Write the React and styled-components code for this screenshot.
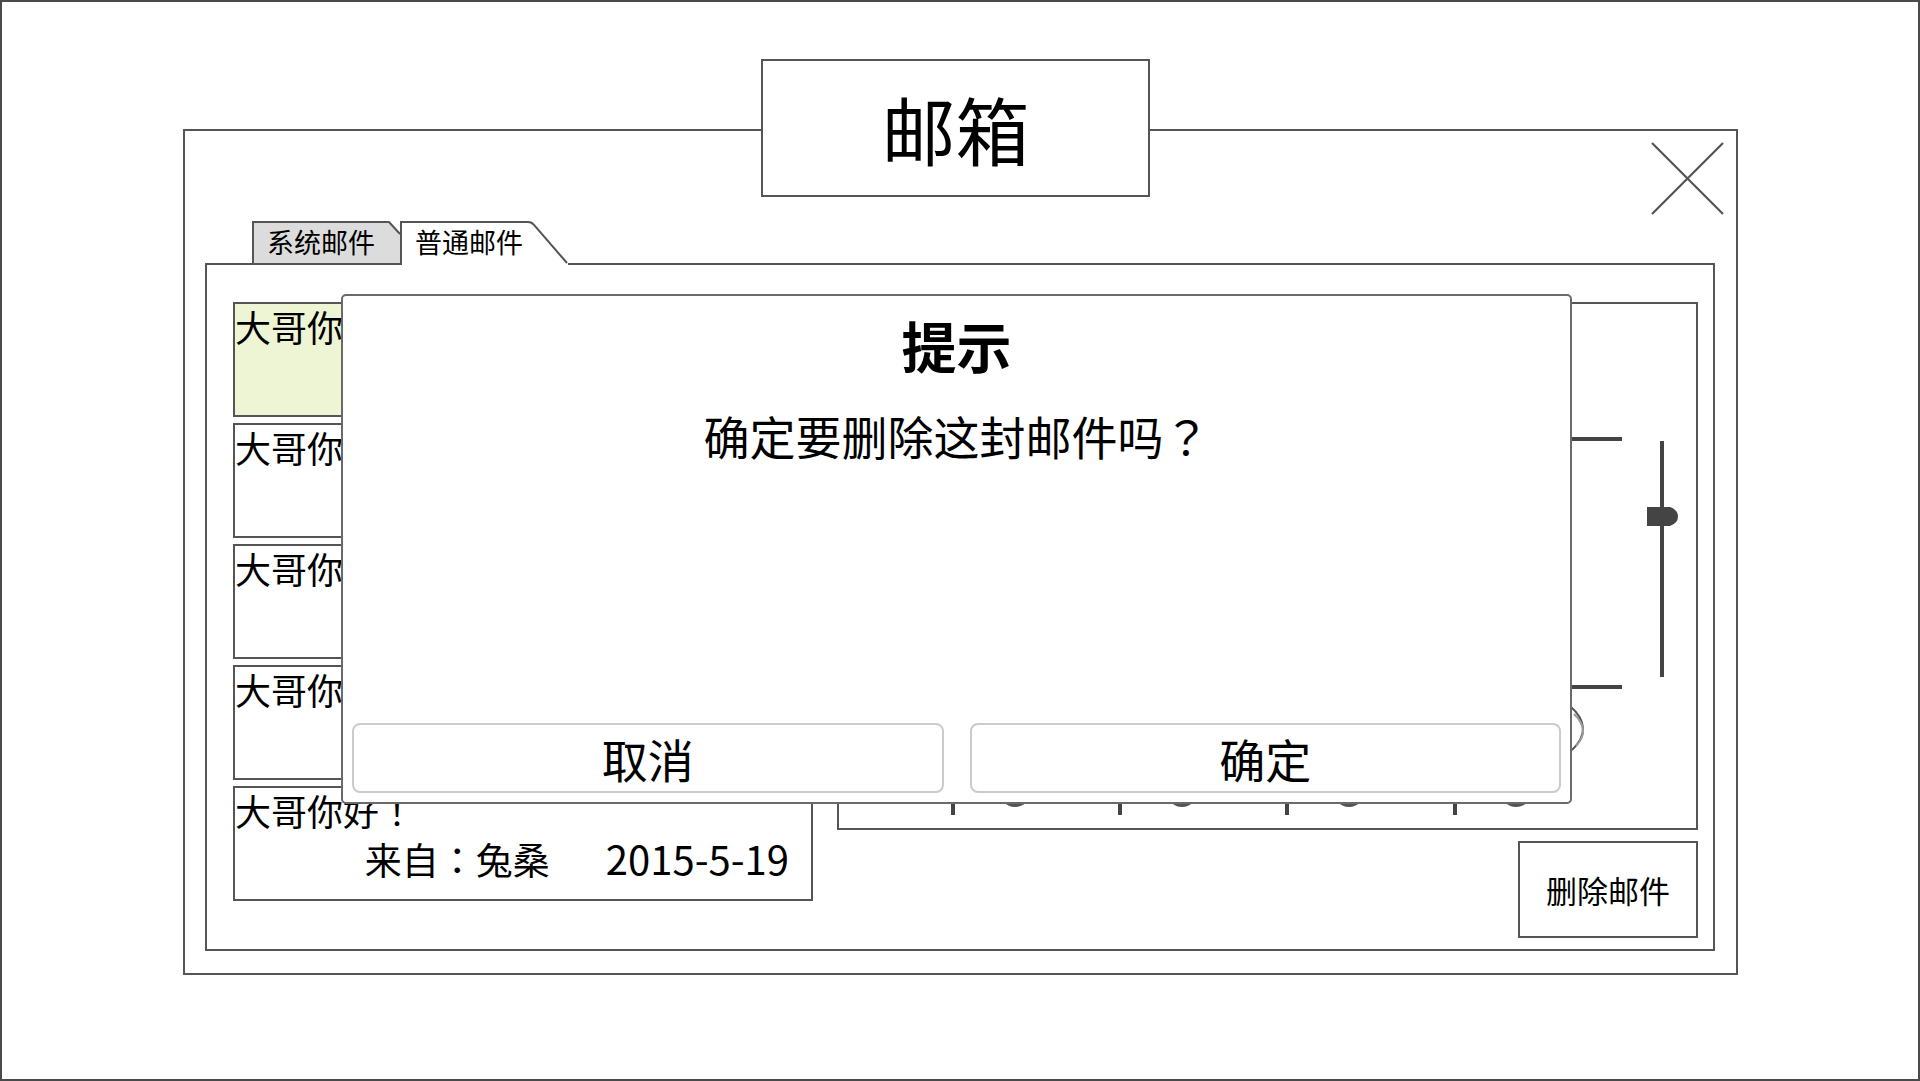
import React, { useState } from 'react';
import styled, { createGlobalStyle } from 'styled-components';

const mails = [
  { id: 1, title: '大哥你好', from: '兔桑', date: '2015-5-19' },
  { id: 2, title: '大哥你好', from: '兔桑', date: '2015-5-19' },
  { id: 3, title: '大哥你好', from: '兔桑', date: '2015-5-19' },
  { id: 4, title: '大哥你好', from: '兔桑', date: '2015-5-19' },
  { id: 5, title: '大哥你好', from: '兔桑', date: '2015-5-19' }
];

const App = () => {
  const [activeTab, setActiveTab] = useState('normal');
  const [selected, setSelected] = useState(1);
  const [confirmOpen, setConfirmOpen] = useState(true);

  return (
    <>
      <GlobalStyle />
      <Frame>
        <Panel>
          <TitleBox>邮箱</TitleBox>
          <CloseButton aria-label="关闭">
            <svg width="73" height="73" viewBox="0 0 73 73">
              <path d="M1 1 L72 72 M72 1 L1 72" stroke="#555" strokeWidth="2.2" fill="none" />
            </svg>
          </CloseButton>

          <TabRow>
            <Tab $active={activeTab === 'system'} $width={149} onClick={() => setActiveTab('system')}>
              <svg width="149" height="42" viewBox="0 0 149 42">
                <polygon points="0,42 0,0 137,0 149,13 149,42" fill="#dcdcdc" />
                <path d="M1 42 V1 H137 L148 13" stroke="#555" strokeWidth="2" fill="none" />
              </svg>
              <TabLabel>系统邮件</TabLabel>
            </Tab>
            <Tab $active={activeTab === 'normal'} $width={168} $front onClick={() => setActiveTab('normal')}>
              <svg width="168" height="44" viewBox="0 0 168 44">
                <polygon points="0,44 0,0 128,0 134,4 168,42 168,44" fill="#fff" />
                <path d="M1 44 V1 H128 Q132 1 134 4 L167 42" stroke="#555" strokeWidth="2" fill="none" />
              </svg>
              <TabLabel>普通邮件</TabLabel>
            </Tab>
          </TabRow>

          <TabPanel>
            <MailList>
              {mails.map((m) => (
                <MailItem key={m.id} $selected={selected === m.id} onClick={() => setSelected(m.id)}>
                  <MailTitle>
                    {m.title}
                    <Punct>！</Punct>
                  </MailTitle>
                  <MailMeta>
                    来自<Punct>：</Punct>
                    {m.from}
                    <MailDate>{m.date}</MailDate>
                  </MailMeta>
                </MailItem>
              ))}
            </MailList>

            <RightColumn>
              <Preview>
                <svg width="857" height="524" viewBox="0 0 857 524">
                  <rect x="500" y="133" width="283" height="4" fill="#444" />
                  <rect x="500" y="381" width="283" height="4" fill="#444" />
                  <rect x="821" y="137" width="4" height="236" fill="#444" />
                  <path d="M808 203 H831 Q839 206 839 212.5 Q839 219 831 222 H808 Z" fill="#444" />
                  <path d="M731 402 Q756 424 733 446" stroke="#555" strokeWidth="2" fill="none" />
                  <path d="M735 410 Q752 426 737 442" stroke="#999" strokeWidth="2" fill="none" />
                  {[176, 343, 510, 677].map((cx) => (
                    <circle key={cx} cx={cx} cy="487" r="16" fill="#555" />
                  ))}
                  {[112, 279, 446, 614].map((x) => (
                    <rect key={x} x={x} y="495" width="4" height="16" fill="#444" />
                  ))}
                </svg>
              </Preview>
              <DeleteButton onClick={() => setConfirmOpen(true)}>删除邮件</DeleteButton>
            </RightColumn>

            {confirmOpen && (
              <Dialog>
                <DialogTitle>提示</DialogTitle>
                <DialogText>
                  确定要删除这封邮件吗<Punct>？</Punct>
                </DialogText>
                <DialogButtons>
                  <DialogButton onClick={() => setConfirmOpen(false)}>取消</DialogButton>
                  <DialogButton onClick={() => setConfirmOpen(false)}>确定</DialogButton>
                </DialogButtons>
              </Dialog>
            )}
          </TabPanel>
        </Panel>
      </Frame>
    </>
  );
};

const GlobalStyle = createGlobalStyle`
  html, body {
    margin: 0;
    padding: 0;
    overflow: hidden;
    background: #fff;
  }
  body {
    font-family: "Noto Sans CJK SC", "Noto Sans", sans-serif;
    color: #000;
  }
  * {
    box-sizing: border-box;
  }
`;

const Frame = styled.div`
  width: 100vw;
  height: 100vh;
  border: 2px solid #4a4a4a;
  padding-top: 127px;
`;

const Panel = styled.div`
  position: relative;
  width: 1555px;
  height: 846px;
  margin: 0 auto;
  border: 2px solid #555;
  padding: 11px 12px 0 20.5px;
  display: flex;
  flex-direction: column;
`;

const TitleBox = styled.div`
  position: absolute;
  left: 576.5px;
  top: -72.3px;
  width: 389px;
  height: 138px;
  border: 2px solid #555;
  background: #fff;
  display: flex;
  align-items: center;
  justify-content: center;
  font-size: 74px;
  line-height: 1;
`;

const CloseButton = styled.button`
  align-self: flex-end;
  width: 73px;
  height: 73px;
  padding: 0;
  border: none;
  background: none;
  cursor: pointer;
  svg {
    display: block;
  }
`;

const TabRow = styled.div`
  display: flex;
  align-items: flex-start;
  height: 42px;
  margin-top: 6px;
  margin-right: 9px;
  padding-left: 47px;
`;

const Tab = styled.div`
  position: relative;
  z-index: ${(p) => (p.$front ? 2 : 1)};
  width: ${(p) => p.$width}px;
  height: ${(p) => (p.$front ? 44 : 42)}px;
  margin-left: ${(p) => (p.$front ? -1 : 0)}px;
  cursor: pointer;
  svg {
    position: absolute;
    left: 0;
    top: 0;
    display: block;
  }
`;

const TabLabel = styled.span`
  position: relative;
  display: block;
  padding-left: 15px;
  font-size: 27px;
  line-height: 42px;
  white-space: nowrap;
`;

const TabPanel = styled.div`
  position: relative;
  height: 688px;
  margin-right: 9px;
  border: 2px solid #555;
  padding: 37px 14px 0 26px;
  display: flex;
  gap: 24px;
  align-items: flex-start;
`;

const MailList = styled.div`
  width: 580px;
  display: flex;
  flex-direction: column;
  gap: 6px;
`;

const MailItem = styled.div`
  height: 115px;
  border: 2px solid #555;
  background: ${(p) => (p.$selected ? '#eef5d4' : '#fff')};
  cursor: pointer;
  overflow: hidden;
`;

const Punct = styled.span`
  font-family: "Noto Sans CJK TC", "Noto Sans CJK SC", sans-serif;
`;

const MailTitle = styled.div`
  font-size: 36px;
  line-height: 44px;
  white-space: nowrap;
`;

const MailMeta = styled.div`
  margin-top: 4px;
  padding-right: 22px;
  text-align: right;
  font-size: 37px;
  line-height: 44px;
  white-space: nowrap;
`;

const MailDate = styled.span`
  margin-left: 56px;
  font-size: 40px;
`;

const RightColumn = styled.div`
  width: 861px;
  display: flex;
  flex-direction: column;
  align-items: flex-end;
`;

const Preview = styled.div`
  width: 861px;
  height: 528px;
  border: 2px solid #555;
  svg {
    display: block;
  }
`;

const DeleteButton = styled.button`
  margin-top: 11px;
  width: 180px;
  height: 97px;
  border: 2px solid #555;
  background: #fff;
  font-family: inherit;
  font-size: 31px;
  color: #000;
  cursor: pointer;
`;

const Dialog = styled.div`
  position: absolute;
  left: 134px;
  top: 28.5px;
  z-index: 5;
  width: 1231px;
  height: 510px;
  border: 2px solid #6a6a6a;
  border-radius: 5px;
  background: #fff;
  padding: 18px 9px 9px;
  display: flex;
  flex-direction: column;
  align-items: center;
`;

const DialogTitle = styled.div`
  font-size: 55px;
  font-weight: 700;
  line-height: 60px;
`;

const DialogText = styled.div`
  margin-top: 33px;
  font-size: 46px;
  line-height: 56px;
`;

const DialogButtons = styled.div`
  margin-top: auto;
  width: 100%;
  display: grid;
  grid-template-columns: 1fr 1fr;
  gap: 26px;
`;

const DialogButton = styled.button`
  height: 70px;
  border: 2px solid #cbcbcb;
  border-radius: 8px;
  background: #fff;
  font-family: inherit;
  font-size: 46px;
  line-height: 1;
  color: #000;
  cursor: pointer;
`;

export default App;
